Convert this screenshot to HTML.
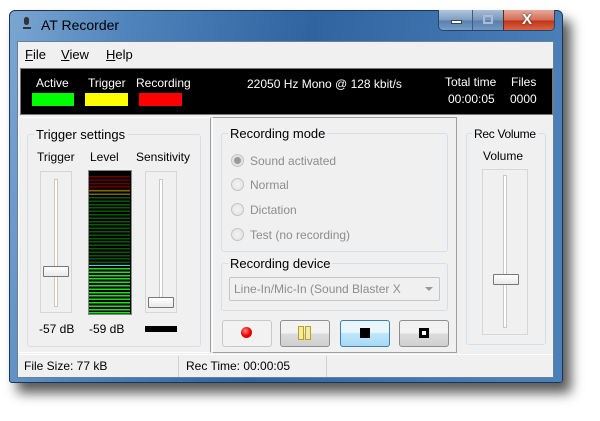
<!DOCTYPE html>
<html><head><meta charset="utf-8"><style>
*{box-sizing:border-box;margin:0;padding:0}
body{width:600px;height:421px;background:#fff;position:relative;overflow:hidden;font-family:"Liberation Sans",sans-serif;font-size:12px;color:#000}
.a{position:absolute}
.win{left:9px;top:10px;width:554px;height:373px;border-radius:6px 6px 3px 3px;background:linear-gradient(100deg,#7aa6d2 0px,#4f83bb 120px,#2f64a0 300px,#4a80b8 554px);border:1px solid #1c3555;box-shadow:8px 10px 12px rgba(0,0,0,.65)}
.client{left:17px;top:41px;width:537px;height:337px;background:#f0f0f0;border:1px solid #6a7f98}
.t{position:absolute;white-space:nowrap}
.grp{position:absolute;border:1px solid #d5dfe5;border-radius:3px}
.gl{position:absolute;background:#f0f0f0;padding:0 2px;font-size:13px;white-space:nowrap}
.sl{position:absolute;border:1px solid #d6d6d6;background:#f0f0f0}
.track{position:absolute;width:4px;border:1px solid #c8c8c8;background:#fff}
.thumb{position:absolute;height:11px;border:1px solid #777;border-radius:1px;background:linear-gradient(#fff,#e8e8e8)}
.btn{position:absolute;top:320px;height:27px;width:50px;border:1px solid #8e8f8f;border-radius:3px;background:linear-gradient(#f2f2f2 50%,#dcdcdc 51%,#cfcfcf)}
.radio{position:absolute;width:13px;height:13px;border-radius:50%;border:1px solid #c4c4c4;background:radial-gradient(#f4f4f4,#e0e0e0)}
.gray{color:#8d8d8d}
</style></head><body>
<div class="a win"></div>
<div class="t" style="left:23px;top:17px;width:8px;height:14px">
<div class="a" style="left:1px;top:0;width:5px;height:8px;border-radius:3px;background:#333"></div>
<div class="a" style="left:0;top:10px;width:8px;height:2px;background:#333"></div></div>
<div class="t" style="left:41px;top:17px;font-size:14px;color:#000">AT Recorder</div>
<div class="a" style="left:438px;top:10px;width:117px;height:21px;border:1px solid #2b4466;border-top:none;border-radius:0 0 5px 5px;overflow:hidden">
<div class="a" style="left:0;top:0;width:33px;height:21px;background:linear-gradient(#b3c6dc,#7c9cc1 50%,#587fae 51%,#7aa0cc)"></div>
<div class="a" style="left:12px;top:10px;width:11px;height:4px;background:#fff;border:1px solid #345"></div>
<div class="a" style="left:33px;top:0;width:31px;height:21px;border-left:1px solid #3d5a80;background:linear-gradient(#a8bdd6,#7693b8 50%,#5a7eab 51%,#7499c4)"></div>
<div class="a" style="left:44px;top:5px;width:10px;height:9px;border:2px solid #a9bdd8"></div>
<div class="a" style="left:64px;top:0;width:53px;height:21px;border-left:1px solid #5a2a20;background:linear-gradient(#e6a99a,#d46a52 50%,#c0331a 51%,#dc6a46)"></div>
<div class="t" style="left:83px;top:1px;font-size:15px;font-weight:bold;color:#fff;text-shadow:0 0 2px #333">X</div>
</div>
<div class="a client"></div>
<div class="t" style="left:25px;top:47px;font-size:13px"><u>F</u>ile</div>
<div class="t" style="left:61px;top:47px;font-size:13px"><u>V</u>iew</div>
<div class="t" style="left:106px;top:47px;font-size:13px"><u>H</u>elp</div>
<div class="a" style="left:20px;top:68px;width:533px;height:47px;background:#000;border:1px solid #777"></div>
<div class="t" style="left:36px;top:76px;color:#fff">Active</div>
<div class="t" style="left:88px;top:76px;color:#fff">Trigger</div>
<div class="t" style="left:136px;top:76px;color:#fff">Recording</div>
<div class="a" style="left:32px;top:93px;width:42px;height:13px;background:#0f0"></div>
<div class="a" style="left:85px;top:93px;width:43px;height:13px;background:#ff0"></div>
<div class="a" style="left:139px;top:93px;width:43px;height:13px;background:#f00"></div>
<div class="t" style="left:247px;top:77px;color:#fff">22050 Hz Mono @ 128 kbit/s</div>
<div class="t" style="left:445px;top:75px;color:#fff">Total time</div>
<div class="t" style="left:511px;top:75px;color:#fff">Files</div>
<div class="t" style="left:448px;top:92px;color:#fff">00:00:05</div>
<div class="t" style="left:510px;top:92px;color:#fff">0000</div>
<div class="a" style="left:18px;top:117px;width:193px;height:236px;border:1px solid #fff;border-right:1px solid #a0a0a0"></div>
<div class="a" style="left:212px;top:117px;width:245px;height:236px;border:1px solid #a0a0a0;border-left:1px solid #fff"></div>
<div class="grp" style="left:27px;top:134px;width:174px;height:213px"></div>
<div class="gl" style="left:34px;top:127px">Trigger settings</div>
<div class="t" style="left:37px;top:150px">Trigger</div>
<div class="t" style="left:90px;top:150px">Level</div>
<div class="t" style="left:136px;top:150px">Sensitivity</div>
<div class="sl" style="left:40px;top:171px;width:32px;height:142px"></div>
<div class="track" style="left:54px;top:179px;height:128px;background:#fffbef"></div>
<div class="thumb" style="left:43px;top:266px;width:26px"></div>
<div class="sl" style="left:145px;top:171px;width:32px;height:142px"></div>
<div class="track" style="left:159px;top:179px;height:128px"></div>
<div class="thumb" style="left:148px;top:297px;width:26px"></div>
<div class="a" style="left:88px;top:170px;width:44px;height:145px;background:#000;border:1px solid #888"></div>
<div class="a" style="left:89px;top:176px;width:41px;height:14px;background:repeating-linear-gradient(#6a0000 0 1.5px,#000 1.5px 3.4px)"></div>
<div class="a" style="left:89px;top:190px;width:41px;height:7px;background:repeating-linear-gradient(#7a6a00 0 1.5px,#000 1.5px 3.4px)"></div>
<div class="a" style="left:89px;top:197px;width:41px;height:67px;background:repeating-linear-gradient(#0a5a0a 0 1.5px,#000 1.5px 3.4px)"></div>
<div class="a" style="left:89px;top:265px;width:41px;height:1px;background:#1ee"></div>
<div class="a" style="left:89px;top:268px;width:41px;height:46px;background:repeating-linear-gradient(#1ee01e 0 1.5px,#000 1.5px 3.4px)"></div>
<div class="t" style="left:39px;top:322px">-57 dB</div>
<div class="t" style="left:89px;top:322px">-59 dB</div>
<div class="a" style="left:145px;top:326px;width:32px;height:6px;background:#000"></div>
<div class="grp" style="left:221px;top:133px;width:227px;height:119px"></div>
<div class="gl" style="left:228px;top:126px">Recording mode</div>
<div class="radio" style="left:231px;top:154px;background:radial-gradient(#999 0 3px,#e4e4e4 4px)"></div>
<div class="t gray" style="left:250px;top:154px">Sound activated</div>
<div class="radio" style="left:231px;top:178px"></div>
<div class="t gray" style="left:250px;top:178px">Normal</div>
<div class="radio" style="left:231px;top:203px"></div>
<div class="t gray" style="left:250px;top:203px">Dictation</div>
<div class="radio" style="left:231px;top:228px"></div>
<div class="t gray" style="left:250px;top:228px">Test (no recording)</div>
<div class="grp" style="left:221px;top:263px;width:227px;height:48px"></div>
<div class="gl" style="left:228px;top:256px">Recording device</div>
<div class="a" style="left:229px;top:277px;width:211px;height:24px;border:1px solid #c4c4c4;border-radius:2px;background:#f0f0f0"></div>
<div class="t gray" style="left:234px;top:282px">Line-In/Mic-In (Sound Blaster X</div>
<div class="a" style="left:425px;top:287px;width:0;height:0;border-left:4px solid transparent;border-right:4px solid transparent;border-top:4px solid #999"></div>
<div class="btn" style="left:222px;border-color:#c8c8c8;background:#f2f2f2"></div>
<div class="a" style="left:241px;top:327px;width:11px;height:11px;border-radius:50%;background:radial-gradient(circle at 40% 35%,#f88,#e00 50%,#b00)"></div>
<div class="btn" style="left:280px"></div>
<div class="a" style="left:298px;top:326px;width:6px;height:14px;border:1px solid #b8a020;background:#f6e9a0"></div>
<div class="a" style="left:305px;top:326px;width:6px;height:14px;border:1px solid #b8a020;background:#f6e9a0"></div>
<div class="btn" style="left:340px;border-color:#3c7fb1;background:linear-gradient(#eaf6fd 45%,#bee6fd 50%,#a7d9f5)"></div>
<div class="a" style="left:360px;top:328px;width:10px;height:10px;background:#000"></div>
<div class="btn" style="left:399px"></div>
<div class="a" style="left:419px;top:328px;width:10px;height:10px;border:3px solid #000;background:#fff"></div>
<div class="grp" style="left:466px;top:133px;width:80px;height:212px"></div>
<div class="gl" style="left:472px;top:127px;font-size:12px;letter-spacing:-0.3px">Rec Volume</div>
<div class="t" style="left:483px;top:149px">Volume</div>
<div class="sl" style="left:482px;top:169px;width:46px;height:166px"></div>
<div class="track" style="left:503px;top:175px;height:153px"></div>
<div class="thumb" style="left:493px;top:274px;width:26px"></div>
<div class="a" style="left:18px;top:354px;width:535px;height:1px;background:#fff"></div>
<div class="a" style="left:178px;top:356px;width:1px;height:21px;background:#d0d0d0"></div>
<div class="a" style="left:326px;top:356px;width:1px;height:21px;background:#d0d0d0"></div>
<div class="t" style="left:24px;top:359px">File Size: 77 kB</div>
<div class="t" style="left:186px;top:359px">Rec Time: 00:00:05</div>
</body></html>
